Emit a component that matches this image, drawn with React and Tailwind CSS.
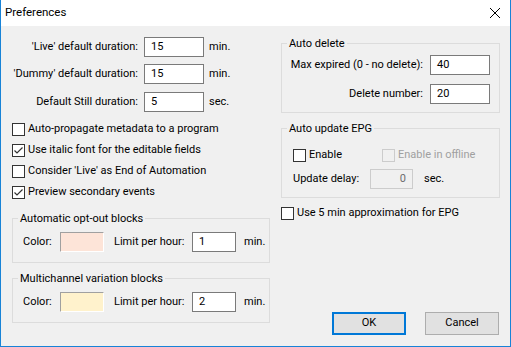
import React from 'react'

const font = { fontFamily: 'Roboto, "Liberation Sans", Arial, sans-serif' }

function Check({ checked, disabled, label }) {
  return (
    <div className="flex items-center h-[21px]">
      <div
        className={`w-[13px] h-[13px] border shrink-0 flex items-center justify-center ${
          disabled ? 'border-[#cccccc] bg-[#f0f0f0]' : 'border-[#333333] bg-white'
        }`}
      >
        {checked && (
          <svg width="11" height="11" viewBox="0 0 11 11">
            <path d="M1.5 5.5 L4 8 L9.5 2.5" fill="none" stroke="#333" strokeWidth="1.2" />
          </svg>
        )}
      </div>
      <span className={`ml-[3px] whitespace-nowrap ${disabled ? 'text-[#a0a0a0]' : 'text-black'}`}>{label}</span>
    </div>
  )
}

function Field({ value, w = 'w-[60px]' }) {
  return (
    <div className={`${w} h-[20px] border border-[#7a7a7a] bg-white flex items-center pl-[6px] shrink-0`}>
      {value}
    </div>
  )
}

function Group({ title, className = '', inner = '', children }) {
  return (
    <fieldset className={`border border-[#dcdcdc] ${className}`}>
      <legend className="ml-[5px] px-[2px] leading-[15px]">{title}</legend>
      <div className={inner}>{children}</div>
    </fieldset>
  )
}

function BlockGroup({ title, color, limit, className }) {
  return (
    <Group title={title} className={className} inner="pt-[6px] pb-[10px] pl-[10px]">
      <div className="flex items-center h-[20px]">
        <span className="w-[37px]">Color:</span>
        <div
          className="w-[44px] h-[20px] border-t border-l border-[#a0a0a0] border-b-white border-r-white border-b border-r"
          style={{ backgroundColor: color }}
        />
        <span className="ml-[10px] w-[78px] whitespace-nowrap">Limit per hour:</span>
        <Field value={limit} w="w-[44px]" />
        <span className="ml-[8px]">min.</span>
      </div>
    </Group>
  )
}

export default function App() {
  const durations = [
    ["'Live' default duration:", '15', 'min.'],
    ["'Dummy' default duration:", '15', 'min.'],
    ['Default Still duration:', '5', 'sec.'],
  ]
  return (
    <div
      className="w-[511px] h-[347px] border-x border-b border-[#1883d7] bg-[#f0f0f0] flex flex-col text-[11px] text-black overflow-hidden"
      style={font}
    >
      {/* title bar */}
      <div className="h-[26px] bg-white flex items-center justify-between pl-[4px] pr-[10px] shrink-0">
        <span className="text-[11.5px]">Preferences</span>
        <svg width="10" height="10" viewBox="0 0 10 10">
          <path d="M0 0 L10 10 M10 0 L0 10" stroke="#000" strokeWidth="1" />
        </svg>
      </div>

      <div className="flex flex-1 pl-[11px] gap-[11px]">
        {/* left column */}
        <div className="w-[258px] pt-[11px] flex flex-col">
          {durations.map(([label, val, unit], i) => (
            <div key={label} className={`flex items-center h-[20px] ${i === 0 ? '' : i === 1 ? 'mt-[7px]' : 'mt-[8px]'}`}>
              <span className="w-[126px] text-right whitespace-nowrap">{label}</span>
              <div className="ml-[6px]">
                <Field value={val} />
              </div>
              <span className="ml-[5px]">{unit}</span>
            </div>
          ))}

          <div className="mt-[7px]">
            <Check label="Auto-propagate metadata to a program" />
            <Check checked label="Use italic font for the editable fields" />
            <Check label="Consider 'Live' as End of Automation" />
            <Check checked label="Preview secondary events" />
          </div>

          <BlockGroup title="Automatic opt-out blocks" color="#fde4d8" limit="1" className="mt-[8px]" />
          <BlockGroup title="Multichannel variation blocks" color="#fff2cc" limit="2" className="mt-[8px]" />
        </div>

        {/* right column */}
        <div className="w-[219px] pt-[10px] pb-[11px] flex flex-col">
          <Group title="Auto delete" inner="pt-[4px] pb-[8px] pl-[7px] pr-[8px]">
            <div className="flex items-center h-[20px]">
              <span className="w-[134px] text-right whitespace-nowrap">Max expired (0 - no delete):</span>
              <div className="ml-[7px]">
                <Field value="40" />
              </div>
            </div>
            <div className="flex items-center h-[20px] mt-[9px]">
              <span className="w-[134px] text-right whitespace-nowrap">Delete number:</span>
              <div className="ml-[7px]">
                <Field value="20" />
              </div>
            </div>
          </Group>

          <Group title="Auto update EPG" className="mt-[8px]" inner="pt-[9px] pb-[8px] pl-[11px]">
            <div className="flex items-center h-[20px]">
              <div className="w-[89px]">
                <Check label="Enable" />
              </div>
              <Check disabled label="Enable in offline" />
            </div>
            <div className="flex items-center h-[20px] mt-[4px]">
              <span className="w-[77px]">Update delay:</span>
              <div className="w-[43px] h-[20px] border border-[#cccccc] bg-[#f0f0f0] flex items-center justify-end pr-[6px] text-[#6d6d6d]">
                0
              </div>
              <span className="ml-[11px]">sec.</span>
            </div>
          </Group>

          <div className="mt-[5px]">
            <Check label="Use 5 min approximation for EPG" />
          </div>

          <div className="mt-auto flex justify-end gap-[19px] pr-[1px]">
            <button className="w-[74px] h-[23px] border-2 border-[#0078d7] bg-[#e1e1e1]">OK</button>
            <button className="w-[74px] h-[23px] border border-[#adadad] bg-[#e1e1e1]">Cancel</button>
          </div>
        </div>
      </div>
    </div>
  )
}
